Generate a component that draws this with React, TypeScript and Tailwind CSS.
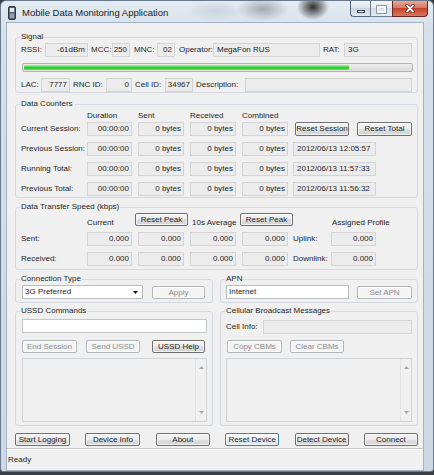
import React from "react";

type P = { className?: string; children?: React.ReactNode };

function RO({ className = "", children }: P) {
  return (
    <div
      className={
        "h-[14px] shrink-0 border border-[#d4d4d4] bg-[#ececec] flex items-center whitespace-nowrap leading-none " +
        className
      }
    >
      {children}
    </div>
  );
}

function Btn({
  className = "",
  children,
  disabled,
  focused,
}: P & { disabled?: boolean; focused?: boolean }) {
  const look = disabled
    ? "border-[#b3b6b9] bg-[#f4f4f4] text-[#8c8c8c]"
    : focused
    ? "border-[#3c7fb1] bg-[linear-gradient(#fafcfe,#eef4f9_50%,#e2ebf2_50%,#dce6ee)] text-[#1e1e1e]"
    : "border-[#707070] bg-[linear-gradient(#f5f5f5,#ececec_50%,#dedede_50%,#d3d3d3)] text-[#1e1e1e]";
  return (
    <div
      className={
        "h-[13px] shrink-0 rounded-[2px] border flex items-center justify-center whitespace-nowrap leading-none shadow-[inset_0_0_0_1px_rgba(255,255,255,0.7)] " +
        look +
        " " +
        className
      }
    >
      {children}
    </div>
  );
}

function Group({ title, className = "", children }: P & { title: string }) {
  return (
    <fieldset className={"border border-[#d3d9de] rounded-[3px] min-w-0 shrink-0 " + className}>
      <legend className="-ml-[1px] px-[1px] leading-[12px]">{title}</legend>
      {children}
    </fieldset>
  );
}

function TextArea({ className = "" }: P) {
  return (
    <div className={"h-[64px] border border-[#cfd3d6] bg-[#f0f0f0] flex justify-end " + className}>
      <div className="w-[11px] h-full border-l border-[#e2e2e2] flex flex-col items-center justify-between py-[7px]">
        <svg width="5" height="3" viewBox="0 0 5 3">
          <path d="M0 3 L2.5 0 L5 3 Z" fill="#a9a9a9" />
        </svg>
        <svg width="5" height="3" viewBox="0 0 5 3">
          <path d="M0 0 L2.5 3 L5 0 Z" fill="#a9a9a9" />
        </svg>
      </div>
    </div>
  );
}

export default function App() {
  return (
    <div className="w-[434px] h-[475px] bg-[#3a3d42] overflow-hidden font-['Liberation_Sans',Arial,sans-serif] text-[8px] text-[#1e1e1e]">
      <div className="h-[472px] flex flex-col rounded-t-[6px] rounded-b-[3px] border border-[#6a7a8c] bg-[radial-gradient(16px_13px_at_312px_6px,rgba(25,25,25,0.9),transparent),radial-gradient(26px_12px_at_262px_8px,rgba(110,120,132,0.55),transparent),radial-gradient(30px_10px_at_215px_10px,rgba(160,175,190,0.35),transparent),linear-gradient(180deg,#e4ebf2,#d6e0ea_30px,#cdd8e4)]">
        {/* Title bar */}
        <div className="h-[22px] flex items-start shrink-0">
          <svg className="ml-[7px] mt-[5px]" width="8" height="14" viewBox="0 0 8 14">
            <rect x="0.5" y="0.5" width="7" height="13" rx="1.5" fill="#56606b" stroke="#2f3740" />
            <rect x="1.8" y="2" width="4.4" height="4" fill="#dfe8f1" />
            <rect x="1.8" y="7.5" width="4.4" height="4.5" fill="#8fa2b5" />
          </svg>
          <span className="ml-[6px] mt-[6px] text-[9.5px] leading-[12px] text-[#1b1b1b] whitespace-nowrap">
            Mobile Data Monitoring Application
          </span>
          <div className="ml-auto mr-[5px] flex h-[16px]">
            <div className="w-[20px] h-full border border-[#55677c] border-r-0 border-t-0 rounded-bl-[4px] bg-[linear-gradient(#f0f4f8,#dbe3eb_50%,#c9d4df_50%,#e0e8f0)] flex items-center justify-center">
              <div className="w-[8px] h-[3px] bg-white border border-[#3a4656] mt-[5px]" />
            </div>
            <div className="w-[22px] h-full border border-[#6d7e91] border-r-0 border-t-0 bg-[linear-gradient(#f2f5f8,#e2e8ee_50%,#d4dce5_50%,#e4eaf0)] flex items-center justify-center">
              <div className="w-[9px] h-[7px] border-[2px] border-[#f4f6f8] shadow-[0_0_0_1px_#8c99a7] mt-[1px]" />
            </div>
            <div className="w-[36px] h-full border border-[#6b2a20] border-t-0 rounded-br-[4px] bg-[linear-gradient(#e9a898,#d8725f_50%,#c4432c_50%,#d9785f)] flex items-center justify-center">
              <svg width="10" height="9" viewBox="0 0 10 9">
                <path d="M2 1.5 L8 7.5 M8 1.5 L2 7.5" stroke="#5a1f16" strokeWidth="3.2" strokeLinecap="round" />
                <path d="M2 1.5 L8 7.5 M8 1.5 L2 7.5" stroke="#ffffff" strokeWidth="1.8" strokeLinecap="round" />
              </svg>
            </div>
          </div>
        </div>

        {/* Client area */}
        <div className="flex-1 mb-[1px] ml-[6px] mr-[10px] bg-[#f0f0f0] shadow-[0_0_0_1px_#a4b3c3] flex flex-col">
          <div className="flex flex-col pl-[8px] pr-[5px]">
            {/* Signal */}
            <Group title="Signal" className="mt-[8px] px-[5px] pb-[1px]">
              <div className="flex h-[13px] items-stretch">
                <div className="w-[24px] flex items-center">RSSI:</div>
                <RO className="w-[43px] h-[13px] justify-end pr-[2px]">-61dBm</RO>
                <div className="w-[24px] pl-[3px] flex items-center">MCC:</div>
                <RO className="w-[18px] h-[13px] justify-end pr-[2px]">250</RO>
                <div className="w-[27px] pl-[4px] flex items-center">MNC:</div>
                <RO className="w-[18px] h-[13px] justify-end pr-[2px]">02</RO>
                <div className="w-[38px] pl-[4px] flex items-center">Operator:</div>
                <RO className="w-[107px] h-[13px] pl-[3px]">MegaFon RUS</RO>
                <div className="w-[24px] pl-[3px] flex items-center">RAT:</div>
                <RO className="w-[68px] h-[13px] pl-[3px]">3G</RO>
              </div>
              <div className="mt-[7px] ml-[1px] w-[391px] h-[9px] rounded-[2px] border border-[#b4b4b4] bg-[linear-gradient(#eeeeee,#dcdcdc)] p-[1px]">
                <div className="h-full w-[325px] rounded-[1px] bg-[linear-gradient(#b4f0b4,#3ad83a_40%,#22c422_65%,#8ee48e)]" />
              </div>
              <div className="flex h-[13px] mt-[6px] items-stretch">
                <div className="w-[20px] flex items-center">LAC:</div>
                <RO className="w-[29px] h-[13px] justify-end pr-[2px]">7777</RO>
                <div className="w-[36px] pl-[3px] flex items-center">RNC ID:</div>
                <RO className="w-[26px] h-[13px] justify-end pr-[2px]">0</RO>
                <div className="w-[33px] pl-[3px] flex items-center">Cell ID:</div>
                <RO className="w-[28px] h-[13px] justify-end pr-[2px]">34967</RO>
                <div className="w-[52px] pl-[3px] flex items-center">Description:</div>
                <RO className="w-[167px] h-[13px]" />
              </div>
            </Group>

            {/* Data Counters */}
            <Group title="Data Counters" className="mt-[5px] px-[5px] pb-[1px]">
              <div className="flex h-[12px] items-center">
                <div className="w-[66px]" />
                <div className="w-[51px]">Duration</div>
                <div className="w-[52px]">Sent</div>
                <div className="w-[52px]">Received</div>
                <div>Combined</div>
              </div>
              {[
                { label: "Current Session:", date: "" },
                { label: "Previous Session:", date: "2012/06/13 12:05:57" },
                { label: "Running Total:", date: "2012/06/13 11:57:33" },
                { label: "Previous Total:", date: "2012/06/13 11:56:32" },
              ].map((r, i) => (
                <div key={r.label} className={"flex h-[14px] items-stretch " + (i === 0 ? "" : "mt-[6px]")}>
                  <div className="w-[66px] flex items-center whitespace-nowrap">{r.label}</div>
                  <RO className="w-[45px] justify-end pr-[2px]">00:00:00</RO>
                  <RO className="w-[46px] ml-[6px] justify-end pr-[2px]">0 bytes</RO>
                  <RO className="w-[46px] ml-[6px] justify-end pr-[2px]">0 bytes</RO>
                  <RO className="w-[46px] ml-[6px] justify-end pr-[2px]">0 bytes</RO>
                  {i === 0 ? (
                    <>
                      <Btn className="w-[54px] h-[14px] ml-[7px]">Reset Session</Btn>
                      <Btn className="w-[55px] h-[14px] ml-[8px]">Reset Total</Btn>
                    </>
                  ) : (
                    <RO className="w-[83px] ml-[5px] pl-[3px]">{r.date}</RO>
                  )}
                </div>
              ))}
            </Group>

            {/* Data Transfer Speed */}
            <Group title="Data Transfer Speed (kbps)" className="mt-[3px] px-[5px] pb-[3px]">
              <div className="flex h-[14px] items-start">
                <div className="w-[66px]" />
                <div className="w-[48px] mt-[5px] leading-[10px]">Current</div>
                <Btn className="w-[53px]">Reset Peak</Btn>
                <div className="w-[52px] pl-[4px] mt-[5px] leading-[10px] whitespace-nowrap">10s Average</div>
                <Btn className="w-[53px]">Reset Peak</Btn>
                <div className="w-[39px]" />
                <div className="mt-[5px] leading-[10px] whitespace-nowrap">Assigned Profile</div>
              </div>
              {[
                { label: "Sent:", side: "Uplink:" },
                { label: "Received:", side: "Downlink:" },
              ].map((r, i) => (
                <div key={r.label} className={"flex h-[14px] items-stretch " + (i === 0 ? "mt-[5px]" : "mt-[6px]")}>
                  <div className="w-[66px] flex items-center">{r.label}</div>
                  <RO className="w-[45px] justify-end pr-[2px]">0.000</RO>
                  <RO className="w-[46px] ml-[6px] justify-end pr-[2px]">0.000</RO>
                  <RO className="w-[46px] ml-[6px] justify-end pr-[2px]">0.000</RO>
                  <RO className="w-[46px] ml-[6px] justify-end pr-[2px]">0.000</RO>
                  <div className="w-[43px] pl-[5px] flex items-center">{r.side}</div>
                  <RO className="w-[45px] justify-end pr-[2px]">0.000</RO>
                </div>
              ))}
            </Group>

            {/* Connection Type / APN */}
            <div className="flex mt-[3px] gap-[7px]">
              <Group title="Connection Type" className="w-[198px] px-[5px] pb-[3px]">
                <div className="flex h-[14px] items-start">
                  <div className="ml-[1px] w-[121px] h-[14px] border border-[#b9bcc0] bg-white flex items-center pl-[2px] pr-[4px]">
                    <span>3G Preferred</span>
                    <svg className="ml-auto" width="5" height="3" viewBox="0 0 5 3">
                      <path d="M0 0 L5 0 L2.5 3 Z" fill="#111" />
                    </svg>
                  </div>
                  <Btn disabled className="w-[53px] ml-[9px] mt-[1px]">Apply</Btn>
                </div>
              </Group>
              <Group title="APN" className="flex-1 px-[5px] pb-[3px]">
                <div className="flex h-[14px] items-start">
                  <div className="w-[123px] h-[14px] border border-[#b9bcc0] bg-white flex items-center pl-[2px]">Internet</div>
                  <Btn disabled className="w-[55px] ml-[8px] mt-[1px]">Set APN</Btn>
                </div>
              </Group>
            </div>

            {/* USSD / CBM */}
            <div className="flex mt-[2px] gap-[7px]">
              <Group title="USSD Commands" className="w-[198px] px-[5px] pb-[3px]">
                <div className="mt-[2px] ml-[1px] w-[185px] h-[14px] border border-[#c3c6c9] bg-white" />
                <div className="flex mt-[7px] ml-[1px]">
                  <Btn disabled className="w-[55px]">End Session</Btn>
                  <Btn disabled className="w-[54px] ml-[9px]">Send USSD</Btn>
                  <Btn className="w-[53px] ml-[12px]">USSD Help</Btn>
                </div>
                <TextArea className="mt-[5px] ml-[1px] w-[185px]" />
              </Group>
              <Group title="Cellular Broadcast Messages" className="flex-1 px-[5px] pb-[3px]">
                <div className="flex mt-[3px] h-[13px] items-stretch">
                  <div className="w-[37px] flex items-center">Cell Info:</div>
                  <RO className="w-[149px] h-[13px]" />
                </div>
                <div className="flex mt-[7px] ml-[1px]">
                  <Btn disabled className="w-[55px]">Copy CBMs</Btn>
                  <Btn disabled className="w-[54px] ml-[8px]">Clear CBMs</Btn>
                </div>
                <TextArea className="mt-[5px] w-[186px]" />
              </Group>
            </div>

            {/* Bottom buttons */}
            <div className="flex justify-between mt-[7px]">
              <Btn className="w-[55px]">Start Logging</Btn>
              <Btn className="w-[55px]">Device Info</Btn>
              <Btn className="w-[54px]">About</Btn>
              <Btn focused className="w-[54px]">Reset Device</Btn>
              <Btn className="w-[54px]">Detect Device</Btn>
              <Btn className="w-[54px]">Connect</Btn>
            </div>
          </div>

          {/* Status bar */}
          <div className="mt-[2px] flex-1 border-t border-[#c8c8c8] shadow-[inset_0_1px_0_#ffffff] flex items-center pl-[1px] text-[8px]">
            Ready
          </div>
        </div>
      </div>
    </div>
  );
}
